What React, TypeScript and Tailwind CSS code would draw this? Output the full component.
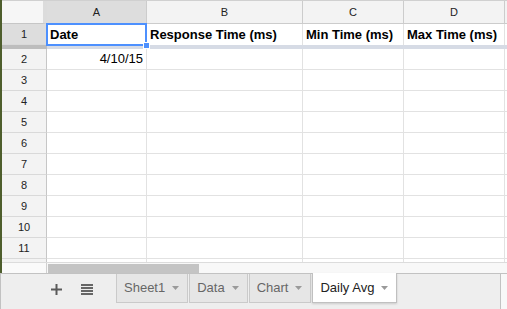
import React from "react"

const font = { fontFamily: '"Liberation Sans", Arial, sans-serif' }

const columns = [
  { label: "A", width: "w-[100px]", head: "Date" },
  { label: "B", width: "w-[156px]", head: "Response Time (ms)" },
  { label: "C", width: "w-[101px]", head: "Min Time (ms)" },
  { label: "D", width: "w-[101px]", head: "Max Time (ms)" },
]

const emptyRows = [3, 4, 5, 6, 7, 8, 9, 10, 11]

function Caret({ className = "" }: { className?: string }) {
  return (
    <svg width="7" height="4" viewBox="0 0 7 4" className={className}>
      <path d="M0 0h7L3.5 4z" fill="currentColor" />
    </svg>
  )
}

function RowHead({ n, active = false }: { n: number; active?: boolean }) {
  return (
    <div
      className={`w-[45px] shrink-0 flex items-center justify-center border-r border-b border-r-[#c6c6c6] border-b-[#d9d9d9] text-[11px] text-[#222] ${
        active ? "bg-[#dddddd]" : "bg-[#f3f3f3]"
      }`}
    >
      {n}
    </div>
  )
}

function EmptyCells() {
  return (
    <>
      {columns.map((c) => (
        <div key={c.label} className={`${c.width} shrink-0 border-r border-b border-[#e2e2e2]`} />
      ))}
      <div className="flex-1 border-b border-[#e2e2e2]" />
    </>
  )
}

function Tab({ name, active = false }: { name: string; active?: boolean }) {
  return (
    <div
      className={`h-[29px] flex items-center pl-[7px] pr-[8px] border-x border-b text-[13px] ${
        active
          ? "bg-white border-[#c0c0c0] text-[#222] -mt-px h-[30px] shadow-[0_1px_2px_rgba(0,0,0,0.15)]"
          : "bg-[#e6e6e6] border-[#cacaca] text-[#666]"
      }`}
    >
      <span>{name}</span>
      <Caret className="ml-[7px] text-[#9a9a9a]" />
    </div>
  )
}

export default function App() {
  return (
    <div className="w-[507px] h-[309px] overflow-hidden bg-white flex flex-col" style={font}>
      {/* grid */}
      <div className="flex flex-col border-l-2 border-[#4e5e2d] h-[273px] shrink-0">
        {/* column headers */}
        <div className="flex h-[24px] shrink-0 border-t border-[#d0d0d0]">
          <div className="w-[45px] shrink-0 bg-[#f6f6f6] border-r-4 border-b border-r-[#dcdcdc] border-b-[#c6c6c6]" />
          {columns.map((c, i) => (
            <div
              key={c.label}
              className={`${c.width} shrink-0 flex items-center justify-center border-r border-b border-[#cccccc] text-[11px] text-[#222] ${
                i === 0 ? "bg-[#dddddd]" : "bg-[#f3f3f3]"
              }`}
            >
              {c.label}
            </div>
          ))}
          <div className="flex-1 bg-[#f3f3f3] border-b border-[#cccccc]" />
        </div>

        {/* row 1 (frozen) */}
        <div className="flex h-[21px] shrink-0">
          <RowHead n={1} active />
          {columns.map((c, i) => (
            <div
              key={c.label}
              className={`${c.width} shrink-0 relative flex items-center px-[3px] border-r border-[#e2e2e2] text-[13px] font-bold text-black whitespace-nowrap overflow-visible`}
            >
              {c.head}
              {i === 0 && (
                <>
                  <div className="absolute -inset-x-px -top-px -bottom-px border-2 border-[#4d90fe] pointer-events-none" />
                  <div className="absolute -right-[4px] -bottom-[4px] w-[7px] h-[7px] bg-[#4d90fe] border border-white z-10" />
                </>
              )}
            </div>
          ))}
          <div className="flex-1" />
        </div>

        {/* frozen separator */}
        <div className="flex h-[4px] shrink-0">
          <div className="w-[45px] shrink-0 bg-[#bdbdbd]" />
          <div className="flex-1 bg-[#d6dbe5]" />
        </div>

        {/* row 2 */}
        <div className="flex h-[21px] shrink-0">
          <RowHead n={2} />
          <div className="w-[100px] shrink-0 flex items-center justify-end px-[3px] border-r border-b border-[#e2e2e2] text-[13px] text-black">
            4/10/15
          </div>
          {columns.slice(1).map((c) => (
            <div key={c.label} className={`${c.width} shrink-0 border-r border-b border-[#e2e2e2]`} />
          ))}
          <div className="flex-1 border-b border-[#e2e2e2]" />
        </div>

        {emptyRows.map((n) => (
          <div key={n} className="flex h-[21px] shrink-0">
            <RowHead n={n} />
            <EmptyCells />
          </div>
        ))}

        {/* partially visible row */}
        <div className="flex h-[3px] shrink-0">
          <div className="w-[45px] shrink-0 bg-[#f3f3f3] border-r border-[#c6c6c6]" />
          {columns.map((c) => (
            <div key={c.label} className={`${c.width} shrink-0 border-r border-[#e2e2e2]`} />
          ))}
          <div className="flex-1" />
        </div>

        {/* horizontal scrollbar */}
        <div className="flex flex-1 border-t border-[#dcdcdc]">
          <div className="w-[45px] shrink-0 bg-[#fafafa] border-r border-[#d0d0d0]" />
          <div className="flex-1 bg-[#f8f8f8] pt-px pl-px">
            <div className="w-[151px] h-[9px] bg-[#c4c4c4]" />
          </div>
        </div>
      </div>

      {/* sheet tabs */}
      <div className="flex flex-1">
        <div className="w-[501px] shrink-0 flex bg-[#eeeeee] border-t border-x border-[#c2c2c2]">
          <div className="flex items-start pt-[10px] pl-[50px] w-[115px] shrink-0">
            <svg width="11" height="11" viewBox="0 0 11 11" className="text-[#5a5a5a]">
              <path d="M4.5 0h2v4.5H11v2H6.5V11h-2V6.5H0v-2h4.5z" fill="currentColor" />
            </svg>
            <svg width="12" height="11" viewBox="0 0 12 11" className="ml-[19px] text-[#666]">
              <rect x="0" y="0" width="12" height="2" fill="currentColor" />
              <rect x="0" y="3" width="12" height="2" fill="currentColor" />
              <rect x="0" y="6" width="12" height="2" fill="currentColor" />
              <rect x="0" y="9" width="12" height="2" fill="currentColor" />
            </svg>
          </div>
          <div className="flex items-start gap-px">
            <Tab name="Sheet1" />
            <Tab name="Data" />
            <Tab name="Chart" />
            <Tab name="Daily Avg" active />
          </div>
        </div>
        <div className="flex-1 bg-[#f8f8f8] border-t border-[#c2c2c2]" />
      </div>
    </div>
  )
}
